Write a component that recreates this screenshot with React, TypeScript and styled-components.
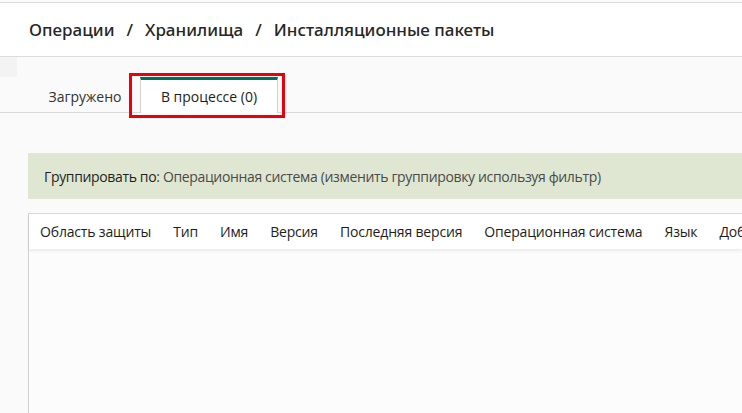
import styled, { createGlobalStyle } from "styled-components";

const GlobalStyle = createGlobalStyle`
  html, body {
    margin: 0;
    padding: 0;
    overflow: hidden;
    background: #fafafa;
  }
  body {
    font-family: "Open Sans", "Noto Sans", sans-serif;
    color: #1d1d1b;
  }
`;

const Page = styled.div`
  width: 742px;
  height: 413px;
  display: flex;
  flex-direction: column;
  overflow: hidden;
`;

const Header = styled.header`
  margin-top: 2px;
  height: 53px;
  background: #fff;
  border-top: 1px solid #dcdcdc;
  border-bottom: 1px solid #dcdcdc;
  display: flex;
  align-items: center;
  padding-left: 29px;
  font-family: "Noto Sans", sans-serif;
  font-size: 17px;
  font-weight: 500;
  color: #262626;
  white-space: nowrap;
`;

const Crumb = styled.span``;

const Slash = styled.span`
  margin: 0 12px;
`;

const TabsArea = styled.div`
  position: relative;
  height: 55px;
  border-bottom: 1px solid #dadada;
  display: flex;
  align-items: flex-end;
  padding-left: 30px;
`;

const Corner = styled.div`
  position: absolute;
  left: 0;
  top: 0;
  width: 17px;
  height: 20px;
  background: #f3f3f3;
`;

const Tab = styled.div<{ $active?: boolean }>`
  position: relative;
  box-sizing: border-box;
  display: flex;
  align-items: center;
  justify-content: center;
  font-size: 14px;
  white-space: nowrap;
  color: ${(p) => (p.$active ? "#1d1d1b" : "#333")};
  padding: 0 ${(p) => (p.$active ? "21px" : "19px")};
  width: ${(p) => (p.$active ? "138px" : "110px")};
  background: ${(p) => (p.$active ? "#fff" : "transparent")};
  border-top: 3px solid ${(p) => (p.$active ? "#00705a" : "transparent")};
  border-left: 1px solid ${(p) => (p.$active ? "#d2d2d2" : "transparent")};
  border-right: 1px solid ${(p) => (p.$active ? "#d2d2d2" : "transparent")};
  margin-bottom: ${(p) => (p.$active ? "-1px" : "0")};
  height: ${(p) => (p.$active ? "36px" : "35px")};
`;

const Highlight = styled.div`
  position: absolute;
  left: -12px;
  top: -7px;
  right: -8px;
  bottom: -5px;
  border: 3px solid #e8000b;
  pointer-events: none;
`;

const Content = styled.div`
  flex: 1;
  display: flex;
  flex-direction: column;
  padding: 40px 0 0 28px;
`;

const GroupBanner = styled.div`
  height: 46px;
  background: #dfe7d2;
  display: flex;
  align-items: center;
  padding-left: 16px;
  font-size: 14px;
  letter-spacing: -0.35px;
  color: #4a4a4a;
  white-space: nowrap;
`;

const BannerLabel = styled.span`
  color: #1f1f1f;
  font-weight: 500;
`;

const Table = styled.div`
  margin-top: 14px;
  flex: 1;
  display: flex;
  flex-direction: column;
  border-top: 1px solid #d9d9d9;
  border-left: 1px solid #d0d0d0;
  background: #fcfcfc;
`;

const HeadRow = styled.div`
  height: 35px;
  display: flex;
  align-items: center;
  gap: 22px;
  padding-left: 11px;
  background: #fff;
  box-shadow: 0 2px 3px rgba(0, 0, 0, 0.07);
  font-size: 14px;
  letter-spacing: -0.17px;
  white-space: nowrap;
  color: #1d1d1b;
`;

const HeadCell = styled.span``;

const columns = [
  "Область защиты",
  "Тип",
  "Имя",
  "Версия",
  "Последняя версия",
  "Операционная система",
  "Язык",
  "Добавлено",
];

export default function App() {
  return (
    <Page>
      <GlobalStyle />
      <Header>
        <Crumb>Операции</Crumb>
        <Slash>/</Slash>
        <Crumb>Хранилища</Crumb>
        <Slash>/</Slash>
        <Crumb>Инсталляционные пакеты</Crumb>
      </Header>
      <TabsArea>
        <Corner />
        <Tab>Загружено</Tab>
        <Tab $active>
          В процессе (0)
          <Highlight />
        </Tab>
      </TabsArea>
      <Content>
        <GroupBanner>
          <BannerLabel>Группировать по</BannerLabel>: Операционная система (изменить группировку используя фильтр)
        </GroupBanner>
        <Table>
          <HeadRow>
            {columns.map((c) => (
              <HeadCell key={c}>{c}</HeadCell>
            ))}
          </HeadRow>
        </Table>
      </Content>
    </Page>
  );
}
